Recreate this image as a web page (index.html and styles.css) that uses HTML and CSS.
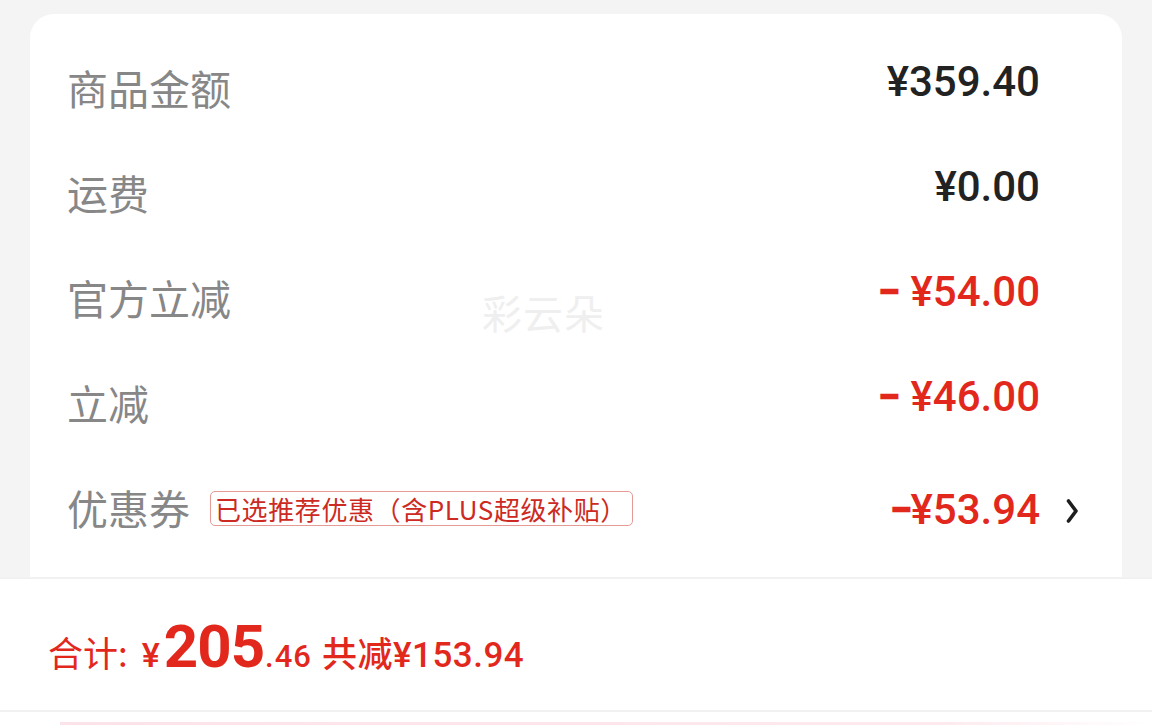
FILE: index.html
```html
<!DOCTYPE html>
<html lang="zh-CN">
<head>
<meta charset="utf-8">
<title>订单金额</title>
<link rel="stylesheet" href="styles.css">
</head>
<body>
<div class="page">
  <div class="card">
    <div class="watermark">彩云朵</div>
    <div class="row">
      <div class="label">商品金额</div>
      <div class="value dark">¥359.40</div>
      <div class="tail"></div>
    </div>
    <div class="row">
      <div class="label">运费</div>
      <div class="value dark">¥0.00</div>
      <div class="tail"></div>
    </div>
    <div class="row">
      <div class="label">官方立减</div>
      <div class="value red"><span class="minus">−</span>¥54.00</div>
      <div class="tail"></div>
    </div>
    <div class="row">
      <div class="label">立减</div>
      <div class="value red"><span class="minus">−</span>¥46.00</div>
      <div class="tail"></div>
    </div>
    <div class="row">
      <div class="label">优惠券</div>
      <div class="tag">已选推荐优惠（含PLUS超级补贴）</div>
      <div class="value red centered"><span class="minus tight">−</span>¥53.94</div>
      <div class="tail chev">
        <svg width="14" height="28" viewBox="0 0 14 28"><path d="M3.5 4 L11 14 L3.5 24" fill="none" stroke="#1e1e1e" stroke-width="3.6" stroke-linecap="round" stroke-linejoin="round"/></svg>
      </div>
    </div>
  </div>
  <div class="bar">
    <div class="total">
      <span class="t-label">合计:</span>
      <span class="t-yen">¥</span><span class="t-int">205</span><span class="t-dec">.46</span>
      <span class="t-save">共减¥153.94</span>
    </div>
  </div>
  <div class="after">
    <div class="pink"></div>
  </div>
</div>
</body>
</html>
```
FILE: styles.css
```css
html, body {
  margin: 0;
  padding: 0;
  background: #f4f4f4;
}
.page {
  width: 1152px;
  height: 725px;
  overflow: hidden;
  padding-top: 14px;
  box-sizing: border-box;
  font-family: "Noto Sans CJK SC", "Noto Sans", sans-serif;
}
.card {
  position: relative;
  margin: 0 30px;
  background: #fff;
  border-radius: 24px 24px 0 0;
  padding: 24px 0 14px 37px;
}
.watermark {
  position: absolute;
  left: 452px;
  top: 278px;
  font-size: 40px;
  line-height: 1;
  color: #efefef;
  letter-spacing: 1px;
}
.row {
  height: 105px;
  display: flex;
  align-items: center;
}
.label {
  font-size: 41px;
  color: #878787;
  line-height: 1;
  margin-bottom: 6px;
}
.value {
  margin-left: auto;
  font-family: Roboto, "Noto Sans CJK SC", sans-serif;
  font-weight: 500;
  font-size: 42px;
  line-height: 1;
  margin-bottom: 18px;
}
.value.centered {
  margin-bottom: 2px;
}
.minus {
  font-weight: 900;
  margin-right: 10px;
}
.minus.tight {
  margin-right: -2px;
}
.dark { color: #222; }
.red { color: #e2281c; }
.tail {
  width: 82px;
  flex: none;
  display: flex;
  align-items: center;
}
.chev {
  padding-left: 25px;
  box-sizing: border-box;
}
.chev svg { display: block; }
.tag {
  margin-left: 20px;
  margin-bottom: 4px;
  font-size: 26px;
  letter-spacing: 0.6px;
  line-height: 33px;
  color: #cc2a22;
  border: 1px solid #e59a94;
  border-radius: 5px;
  padding: 0 5px 0 4px;
}
.bar {
  background: #fff;
  border-top: 2px solid #f1f1f1;
  border-bottom: 2px solid #f1f1f1;
  height: 131px;
  display: flex;
  align-items: center;
  padding-left: 48px;
}
.total {
  display: flex;
  align-items: baseline;
  color: #e2281c;
  padding-top: 4px;
}
.t-label {
  font-size: 35px;
  margin-right: 14px;
}
.t-yen {
  font-family: Roboto, sans-serif;
  font-size: 34px;
  font-weight: 500;
  margin-right: 4px;
}
.t-int {
  font-family: Roboto, sans-serif;
  font-size: 60px;
  font-weight: 700;
  letter-spacing: -1px;
  line-height: 1;
}
.t-dec {
  font-family: Roboto, sans-serif;
  font-size: 31px;
  font-weight: 500;
  margin-left: 1px;
  letter-spacing: 1px;
}
.t-save {
  font-family: Roboto, "Noto Sans CJK SC", sans-serif;
  font-size: 35px;
  font-weight: 500;
  letter-spacing: 0.5px;
  margin-left: 10px;
}
.after {
  background: #fff;
  height: 20px;
  padding-top: 10px;
  box-sizing: border-box;
}
.pink {
  margin-left: 60px;
  height: 3px;
  background: linear-gradient(90deg, #fce3ea, #fde9ee 80%, #fff);
}
```
